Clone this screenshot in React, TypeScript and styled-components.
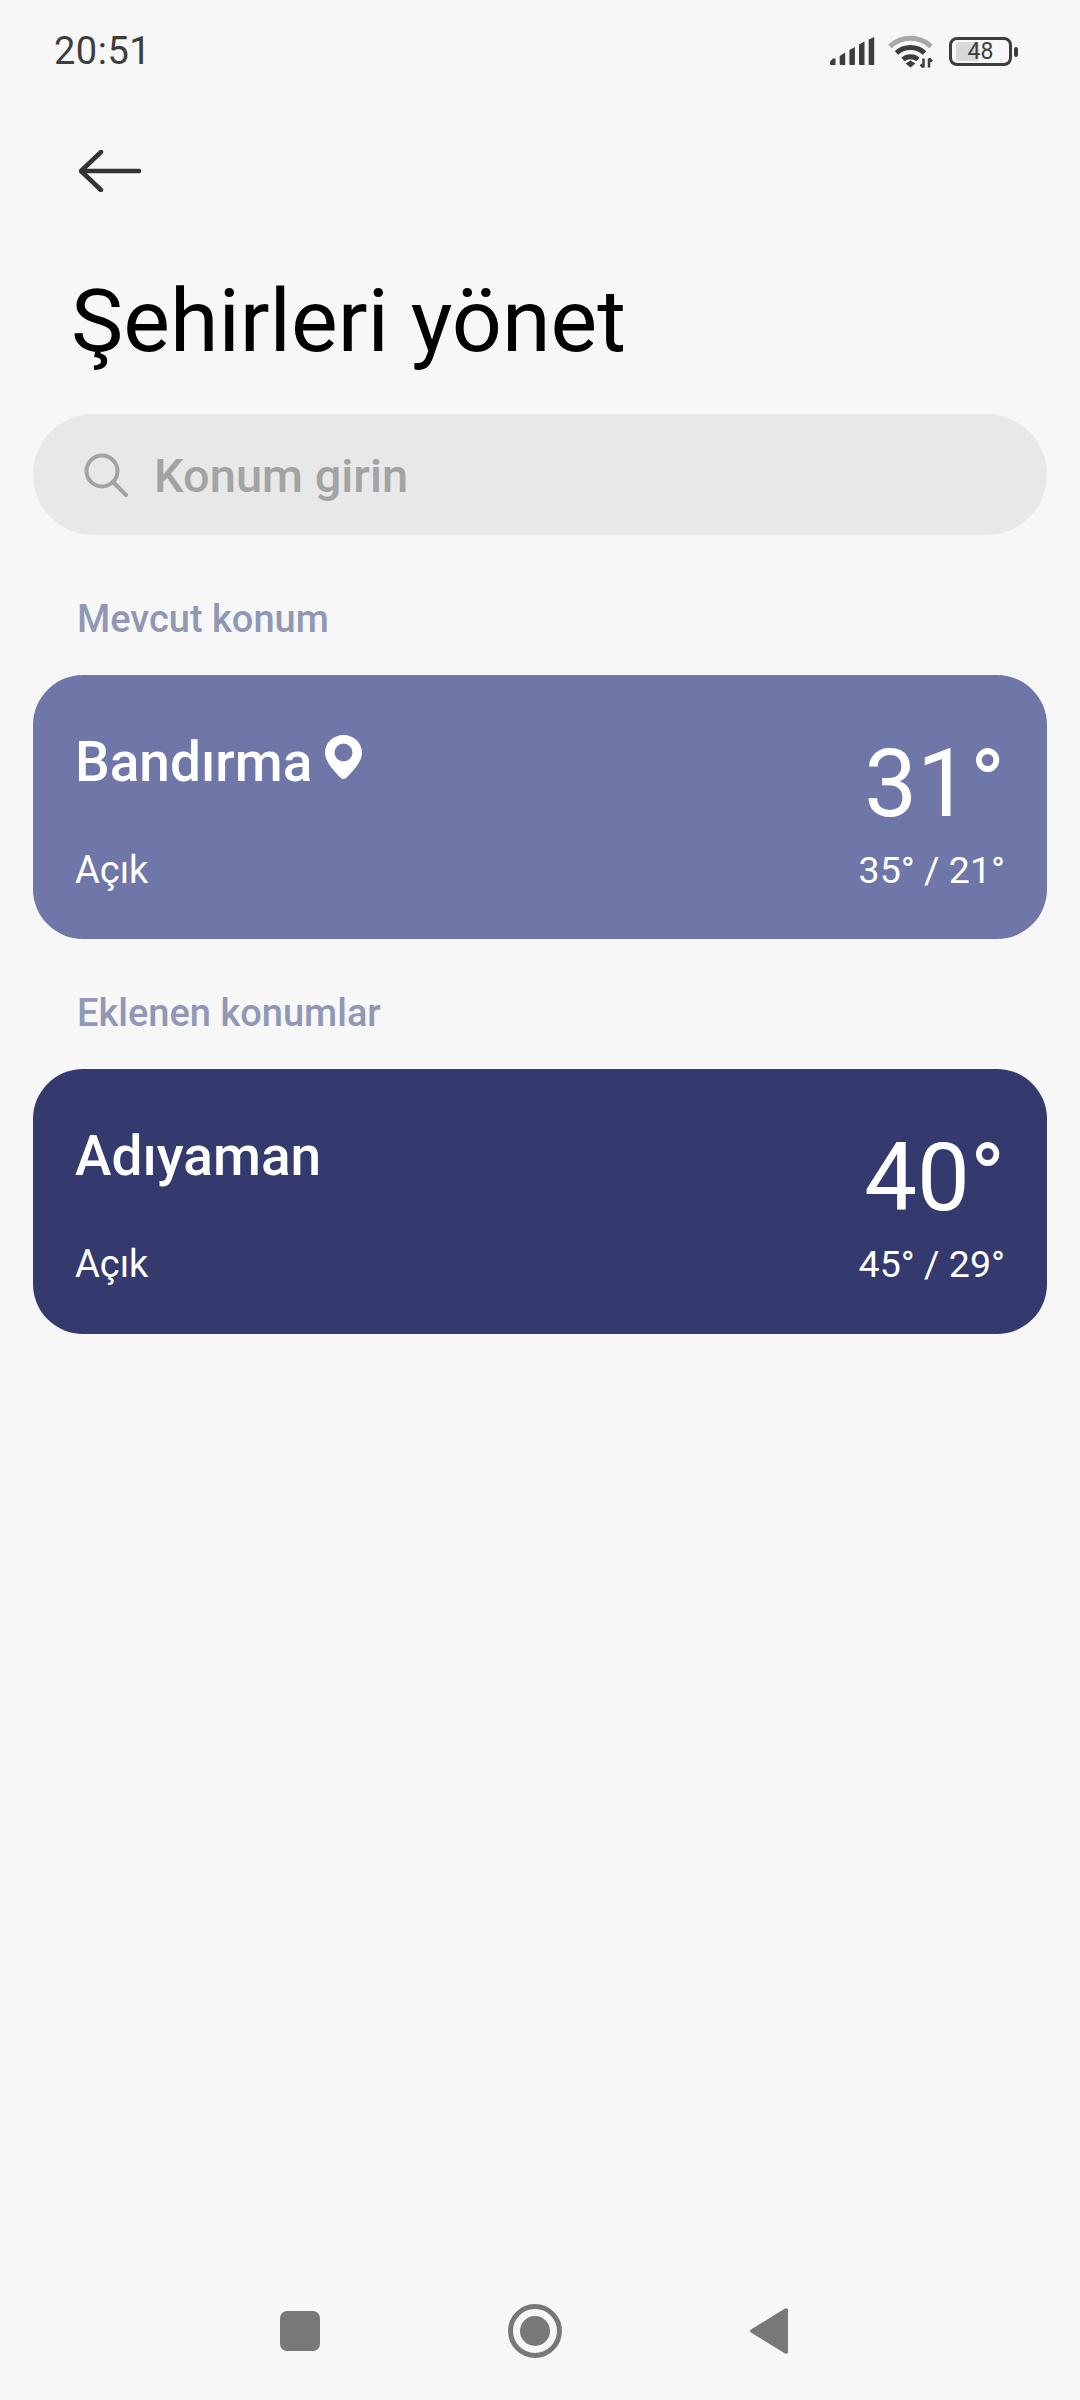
import styled, { createGlobalStyle } from 'styled-components';

const GlobalStyle = createGlobalStyle`
  html, body {
    margin: 0;
    padding: 0;
    background: #f7f7f7;
  }
`;

const Page = styled.div`
  width: 1080px;
  height: 2400px;
  display: flex;
  flex-direction: column;
  background: #f7f7f7;
  font-family: Roboto, sans-serif;
  overflow: hidden;
`;

const StatusBar = styled.div`
  height: 100px;
  padding: 2px 62px 0 54px;
  display: flex;
  align-items: center;
  justify-content: space-between;
  box-sizing: border-box;
`;

const Clock = styled.span`
  font-size: 38px;
  font-weight: 400;
  letter-spacing: 0.5px;
  color: #3d3d3d;
`;

const StatusIcons = styled.div`
  display: flex;
  align-items: center;
  gap: 12px;
`;

const Battery = styled.div`
  position: relative;
  width: 63px;
  height: 29px;
  margin-left: 2px;
  margin-right: 6px;
  border: 3px solid #3d3d3d;
  border-radius: 8px;
  box-sizing: border-box;
  display: flex;
  align-items: center;
  justify-content: center;
  font-size: 23px;
  color: #3d3d3d;

  &::before {
    content: '';
    position: absolute;
    left: 4px;
    top: 2px;
    bottom: 2px;
    width: 23px;
    border-radius: 2px;
    background: #d8d8d8;
  }

  &::after {
    content: '';
    position: absolute;
    right: -9px;
    top: 7px;
    width: 4px;
    height: 10px;
    border-radius: 2px;
    background: #3d3d3d;
  }
`;

const BatteryLevel = styled.span`
  position: relative;
`;

const BackButton = styled.div`
  height: 42px;
  margin: 50px 0 0 79px;
  display: flex;
`;

const Title = styled.h1`
  margin: 79px 0 0 71px;
  font-size: 88px;
  line-height: 100px;
  font-weight: 400;
  color: #000;
`;

const SearchBar = styled.div`
  height: 121px;
  margin: 43px 33px 9.5px;
  padding: 0 0 0 51px;
  border-radius: 61px;
  background: #e8e8e8;
  display: flex;
  align-items: center;
  gap: 26px;
`;

const Placeholder = styled.span`
  font-size: 47px;
  font-weight: 500;
  color: #a3a3a3;
  position: relative;
  top: 1px;
`;

const SectionLabel = styled.div`
  margin: 52px 0 0 77px;
  height: 44px;
  line-height: 44px;
  font-size: 38px;
  font-weight: 500;
  color: #9098b5;
`;

const Card = styled.div<{ $color: string }>`
  height: 264.5px;
  margin: 34px 33px 0;
  padding: 55px 42px 0;
  box-sizing: border-box;
  border-radius: 50px;
  background: ${(p) => p.$color};
  color: #fff;
  display: grid;
  grid-template-columns: 1fr auto;
`;

const CardLeft = styled.div`
  display: flex;
  flex-direction: column;
`;

const CardRight = styled.div`
  display: flex;
  flex-direction: column;
  align-items: flex-end;
`;

const CityRow = styled.div`
  display: flex;
  align-items: flex-start;
  gap: 13px;
  height: 64px;
`;

const CityName = styled.span`
  font-size: 55px;
  line-height: 64px;
  font-weight: 500;
`;

const PinWrap = styled.span`
  margin-top: 5px;
  display: flex;
`;

const Condition = styled.span`
  margin-top: 53px;
  font-size: 38px;
  line-height: 46px;
`;

const Temp = styled.span`
  margin-top: -2px;
  font-size: 94px;
  line-height: 112px;
`;

const Range = styled.span`
  margin-top: 7px;
  font-size: 37.5px;
  line-height: 46px;
`;

const NavBar = styled.div`
  margin-top: auto;
  height: 96px;
  box-sizing: border-box;
  padding: 0 12px 42px 0;
  display: flex;
  justify-content: center;
  align-items: center;
  gap: 188px;
`;

const NavSquare = styled.div`
  width: 40px;
  height: 40px;
  border-radius: 7px;
  background: #787878;
`;

const NavCircle = styled.div`
  width: 54px;
  height: 54px;
  box-sizing: border-box;
  border: 5px solid #787878;
  border-radius: 50%;
  display: flex;
  align-items: center;
  justify-content: center;

  &::after {
    content: '';
    width: 30px;
    height: 30px;
    border-radius: 50%;
    background: #787878;
  }
`;

const SignalIcon = () => (
  <svg width="45" height="28" viewBox="0 0 45 28" fill="#3d3d3d">
    <path d="M0 24.5 3 21.5h2.5V28H1a1 1 0 0 1-1-1Z" />
    <path d="M9.7 19 15.2 15.5V28h-4.5a1 1 0 0 1-1-1Z" />
    <path d="M19.4 13 24.9 10V28h-4.5a1 1 0 0 1-1-1Z" />
    <path d="M29 7.5 34.5 4.5V28H30a1 1 0 0 1-1-1Z" />
    <path d="M38.7 2.5 44.2 0V28h-4.5a1 1 0 0 1-1-1Z" />
  </svg>
);

const WifiIcon = () => (
  <svg width="48" height="34" viewBox="0 0 48 34" fill="none">
    <path d="M3 12.5C14 1.5 33 1.5 44 12.5" stroke="#a8a8a8" strokeWidth="5" />
    <path d="M9.5 19C17 11.5 30 11.5 37.5 19" stroke="#3d3d3d" strokeWidth="5" />
    <path d="M16 25.500C20 21.800 27 21.800 31 25.500" stroke="#3d3d3d" strokeWidth="5" />
    <path d="M18.500 29.500 23.500 26.500 28.500 29.500 23.500 33.500Z" fill="#3d3d3d" />
    <path d="M36.500 24.500v9M33.500 30.500l3 3M42 33.500v-9M42 24.500l3 3" stroke="#3d3d3d" strokeWidth="2.500" />
  </svg>
);

const BackArrow = () => (
  <svg width="62" height="42" viewBox="0 0 62 42" fill="none" stroke="#333" strokeWidth="4.5" strokeLinecap="round" strokeLinejoin="round">
    <path d="M60 21H2M22 2 2 21l20 19" />
  </svg>
);

const SearchIcon = () => (
  <svg width="44" height="44" viewBox="0 0 44 44" fill="none" stroke="#a3a3a3" strokeWidth="4" strokeLinecap="round">
    <circle cx="18" cy="18" r="15.500" />
    <path d="M29 29 42 42" />
  </svg>
);

const PinIcon = () => (
  <svg width="37" height="44" viewBox="0 0 37 44" fill="#fff" fillRule="evenodd">
    <path d="M18.500 0C8.300 0 0 7.900 0 17.800 0 27 9.500 36.500 15.700 42.800c1.600 1.600 4 1.600 5.600 0C27.500 36.500 37 27 37 17.800 37 7.900 28.700 0 18.500 0Zm0 8.500a9 9 0 1 1 0 18 9 9 0 0 1 0-18Z" />
  </svg>
);

const NavBackIcon = () => (
  <svg width="38" height="46" viewBox="0 0 38 46" fill="#787878">
    <path d="M35 .6c1.400-1 3-.3 3 1.400v42c0 1.700-1.600 2.400-3 1.400L1 24.600c-1.300-.8-1.300-2.400 0-3.200L35 .6Z" />
  </svg>
);

export default function App() {
  return (
    <Page>
      <GlobalStyle />
      <StatusBar>
        <Clock>20:51</Clock>
        <StatusIcons>
          <SignalIcon />
          <WifiIcon />
          <Battery>
            <BatteryLevel>48</BatteryLevel>
          </Battery>
        </StatusIcons>
      </StatusBar>
      <BackButton>
        <BackArrow />
      </BackButton>
      <Title>Şehirleri yönet</Title>
      <SearchBar>
        <SearchIcon />
        <Placeholder>Konum girin</Placeholder>
      </SearchBar>
      <SectionLabel>Mevcut konum</SectionLabel>
      <Card $color="#6f76a8">
        <CardLeft>
          <CityRow>
            <CityName>Bandırma</CityName>
            <PinWrap>
              <PinIcon />
            </PinWrap>
          </CityRow>
          <Condition>Açık</Condition>
        </CardLeft>
        <CardRight>
          <Temp>31°</Temp>
          <Range>35° / 21°</Range>
        </CardRight>
      </Card>
      <SectionLabel>Eklenen konumlar</SectionLabel>
      <Card $color="#343a6e">
        <CardLeft>
          <CityRow>
            <CityName>Adıyaman</CityName>
          </CityRow>
          <Condition>Açık</Condition>
        </CardLeft>
        <CardRight>
          <Temp>40°</Temp>
          <Range>45° / 29°</Range>
        </CardRight>
      </Card>
      <NavBar>
        <NavSquare />
        <NavCircle />
        <NavBackIcon />
      </NavBar>
    </Page>
  );
}
